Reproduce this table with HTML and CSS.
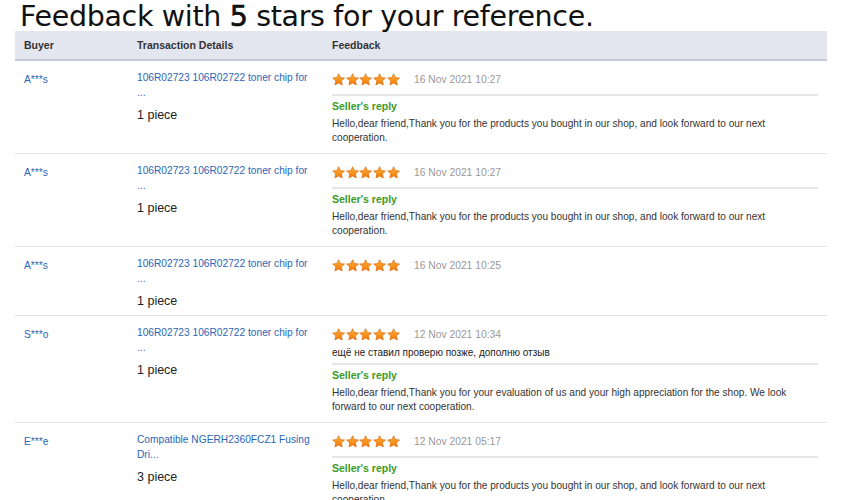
FILE: index.html
```html
<!DOCTYPE html>
<html>
<head>
<meta charset="utf-8">
<link rel="stylesheet" href="styles.css">
</head>
<body>
<svg class="defs" width="0" height="0">
  <defs>
    <linearGradient id="sg" x1="0" y1="0" x2="0" y2="1">
      <stop offset="0" stop-color="#ffb13b"/>
      <stop offset="1" stop-color="#f27a06"/>
    </linearGradient>
    <symbol id="star" viewBox="0 0 24 23">
      <path d="M12 1l3.2 7 7.6.8-5.7 5.2 1.6 7.5L12 17.7 5.3 21.5l1.6-7.5L1.2 8.8l7.6-.8z" fill="url(#sg)" stroke="#d9660a" stroke-width="1.2" stroke-linejoin="round"/>
    </symbol>
  </defs>
</svg>
<h1 class="title">Feedback with <b>5</b> stars for your reference.</h1>
<div class="table">
  <div class="row head">
    <div class="c-buyer">Buyer</div>
    <div class="c-trans">Transaction Details</div>
    <div class="c-fb">Feedback</div>
  </div>

  <div class="row">
    <div class="c-buyer"><a class="link">A***s</a></div>
    <div class="c-trans">
      <a class="link prod">106R02723 106R02722 toner chip for ...</a>
      <div class="qty">1 piece</div>
    </div>
    <div class="c-fb">
      <div class="rate"><span class="stars"><svg><use href="#star"/></svg><svg><use href="#star"/></svg><svg><use href="#star"/></svg><svg><use href="#star"/></svg><svg><use href="#star"/></svg></span><span class="date">16 Nov 2021 10:27</span></div>
      <div class="reply">
        <div class="reply-h">Seller's reply</div>
        <div class="reply-t">Hello,dear friend,Thank you for the products you bought in our shop, and look forward to our next cooperation.</div>
      </div>
    </div>
  </div>

  <div class="row">
    <div class="c-buyer"><a class="link">A***s</a></div>
    <div class="c-trans">
      <a class="link prod">106R02723 106R02722 toner chip for ...</a>
      <div class="qty">1 piece</div>
    </div>
    <div class="c-fb">
      <div class="rate"><span class="stars"><svg><use href="#star"/></svg><svg><use href="#star"/></svg><svg><use href="#star"/></svg><svg><use href="#star"/></svg><svg><use href="#star"/></svg></span><span class="date">16 Nov 2021 10:27</span></div>
      <div class="reply">
        <div class="reply-h">Seller's reply</div>
        <div class="reply-t">Hello,dear friend,Thank you for the products you bought in our shop, and look forward to our next cooperation.</div>
      </div>
    </div>
  </div>

  <div class="row">
    <div class="c-buyer"><a class="link">A***s</a></div>
    <div class="c-trans">
      <a class="link prod">106R02723 106R02722 toner chip for ...</a>
      <div class="qty">1 piece</div>
    </div>
    <div class="c-fb">
      <div class="rate"><span class="stars"><svg><use href="#star"/></svg><svg><use href="#star"/></svg><svg><use href="#star"/></svg><svg><use href="#star"/></svg><svg><use href="#star"/></svg></span><span class="date">16 Nov 2021 10:25</span></div>
    </div>
  </div>

  <div class="row">
    <div class="c-buyer"><a class="link">S***o</a></div>
    <div class="c-trans">
      <a class="link prod">106R02723 106R02722 toner chip for ...</a>
      <div class="qty">1 piece</div>
    </div>
    <div class="c-fb">
      <div class="rate"><span class="stars"><svg><use href="#star"/></svg><svg><use href="#star"/></svg><svg><use href="#star"/></svg><svg><use href="#star"/></svg><svg><use href="#star"/></svg></span><span class="date">12 Nov 2021 10:34</span></div>
      <div class="buyer-t">ещё не ставил проверю позже, дополню отзыв</div>
      <div class="reply after-text">
        <div class="reply-h">Seller's reply</div>
        <div class="reply-t">Hello,dear friend,Thank you for your evaluation of us and your high appreciation for the shop. We look forward to our next cooperation.</div>
      </div>
    </div>
  </div>

  <div class="row">
    <div class="c-buyer"><a class="link">E***e</a></div>
    <div class="c-trans">
      <a class="link prod">Compatible NGERH2360FCZ1 Fusing Dri...</a>
      <div class="qty">3 piece</div>
    </div>
    <div class="c-fb">
      <div class="rate"><span class="stars"><svg><use href="#star"/></svg><svg><use href="#star"/></svg><svg><use href="#star"/></svg><svg><use href="#star"/></svg><svg><use href="#star"/></svg></span><span class="date">12 Nov 2021 05:17</span></div>
      <div class="reply">
        <div class="reply-h">Seller's reply</div>
        <div class="reply-t">Hello,dear friend,Thank you for the products you bought in our shop, and look forward to our next cooperation.</div>
      </div>
    </div>
  </div>
</div>
</body>
</html>
```
FILE: styles.css
```css
html, body {
  margin: 0;
  padding: 0;
  background: #fff;
  overflow: hidden;
}
body {
  font-family: "Liberation Sans", Arial, sans-serif;
  color: #333;
}
.defs {
  position: absolute;
  width: 0;
  height: 0;
}
.title {
  margin: 0;
  padding: 0 0 0 20px;
  height: 31px;
  font-family: "DejaVu Sans", sans-serif;
  font-weight: normal;
  font-size: 28.5px;
  line-height: 34px;
  color: #111;
  letter-spacing: -0.33px;
  white-space: nowrap;
}
.title b {
  font-weight: normal;
  -webkit-text-stroke: 0.7px #111;
}
.table {
  margin-left: 15px;
  width: 812px;
}
.row {
  display: grid;
  grid-template-columns: 113px 195px 1fr;
  border-bottom: 1px solid #e3e3e3;
}
.row > div {
  padding: 8px 9px 6px;
}
.row > .c-trans {
  padding-top: 9px;
}
.row > .c-fb {
  padding-bottom: 8px;
}
.row.head > div {
  padding-top: 0;
  padding-bottom: 0;
}
.head {
  background: #e4e6ef;
  border-bottom: 2px solid #c6c9d7;
  height: 28px;
  align-items: center;
  font-weight: bold;
  font-size: 10.5px;
  color: #333;
}
.link {
  color: #2b66b5;
  text-decoration: none;
  font-size: 10.2px;
}
.c-buyer .link {
  display: block;
  line-height: 14px;
  margin-top: 4px;
}
.prod {
  display: block;
  line-height: 15px;
  width: 176px;
}
.qty {
  margin-top: 7px;
  font-size: 12.5px;
  line-height: 16px;
  color: #222;
}
.rate {
  display: flex;
  align-items: center;
  height: 20px;
}
.stars {
  display: flex;
  gap: 0.5px;
}
.stars svg {
  width: 13.2px;
  height: 13px;
}
.date {
  margin-left: 14px;
  font-size: 10.3px;
  color: #999;
}
.buyer-t {
  margin-top: 2px;
  font-size: 10px;
  line-height: 13px;
  color: #222;
}
.reply {
  margin-top: 5px;
  border-top: 2px solid #e6e6e6;
}
.reply.after-text {
  margin-top: 4px;
}
.reply-h {
  margin-top: 3px;
  font-size: 10.5px;
  font-weight: bold;
  color: #3c9a1e;
  line-height: 14px;
}
.reply-t {
  margin-top: 4px;
  font-size: 10.1px;
  line-height: 14px;
  color: #333;
}
```
